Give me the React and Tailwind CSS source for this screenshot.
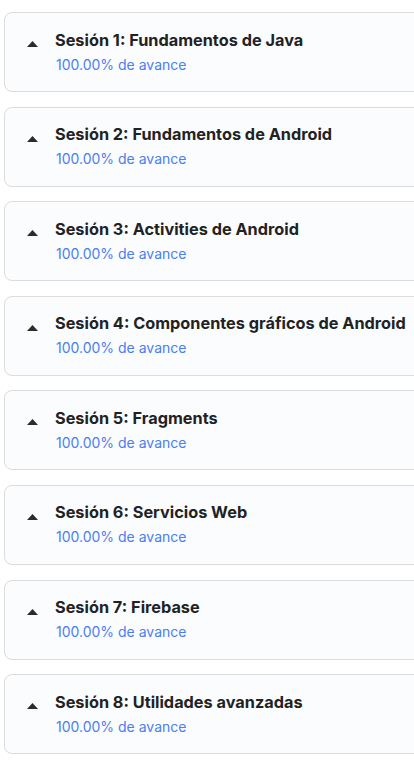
export default function App() {
  const sessions = [
    "Sesión 1: Fundamentos de Java",
    "Sesión 2: Fundamentos de Android",
    "Sesión 3: Activities de Android",
    "Sesión 4: Componentes gráficos de Android",
    "Sesión 5: Fragments",
    "Sesión 6: Servicios Web",
    "Sesión 7: Firebase",
    "Sesión 8: Utilidades avanzadas",
  ];
  return (
    <div className="w-[414px] h-[762px] overflow-hidden bg-white pt-3 pl-1 font-['Inter',sans-serif]">
      <div className="flex flex-col gap-[14.6px] w-[430px]">
        {sessions.map((s) => (
          <div
            key={s}
            className="h-[80px] rounded-lg border border-[#dcdcdc] bg-[#fbfcfe] flex items-center pl-[22px] pb-[2px]"
          >
            <svg width="11" height="6" viewBox="0 0 11 6" className="mr-[17px] mt-[-14px] shrink-0">
              <path d="M5.5 0 L11 6 L0 6 Z" fill="#2b2b2b" />
            </svg>
            <div className="flex flex-col">
              <div className="text-[16.3px] leading-[24px] font-bold text-[#222] mb-[3px]">{s}</div>
              <div className="text-[14px] leading-[20px] text-[#4a7ef2] pl-px">100.00% de avance</div>
            </div>
          </div>
        ))}
      </div>
    </div>
  );
}
